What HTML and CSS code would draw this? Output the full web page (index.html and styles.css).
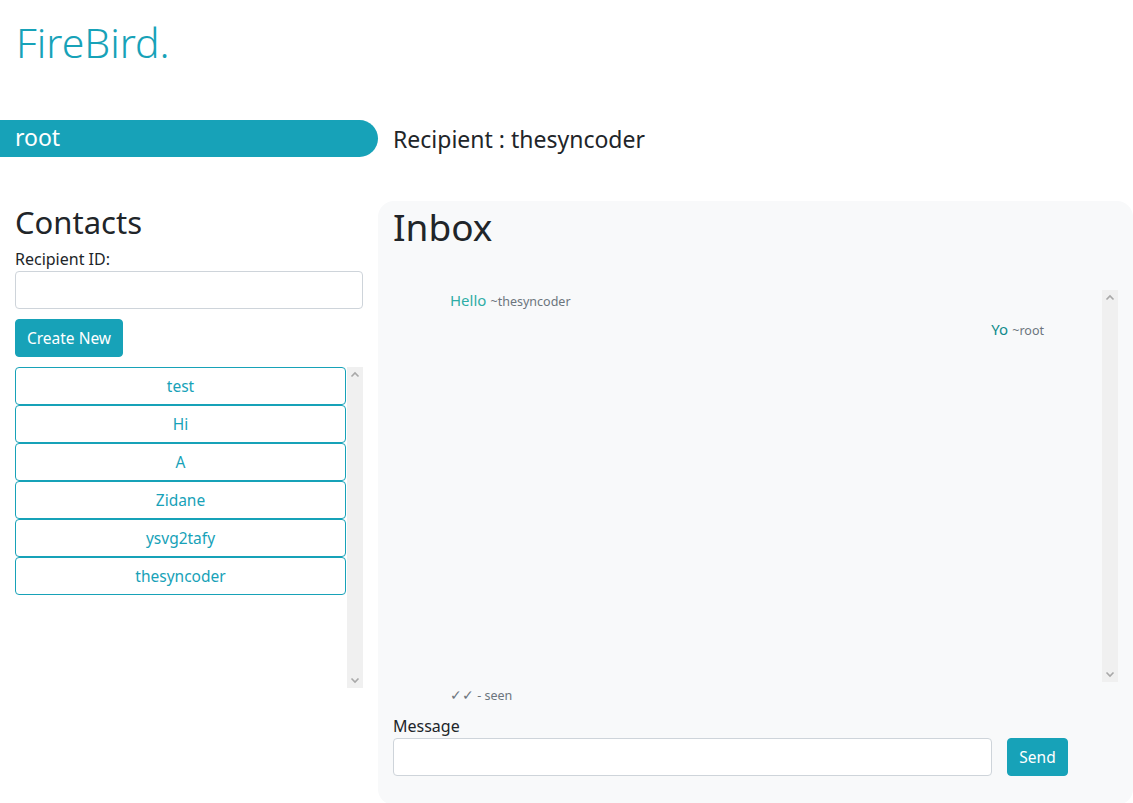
FILE: index.html
```html
<!DOCTYPE html>
<html lang="en">
<head>
<meta charset="utf-8">
<title>FireBird</title>
<link rel="stylesheet" href="styles.css">
</head>
<body>
<header class="brand">FireBird.</header>

<div class="userbar">
  <div class="user-pill">root</div>
  <div class="recipient">Recipient : thesyncoder</div>
</div>

<main class="main">
  <section class="contacts">
    <h2 class="contacts-title">Contacts</h2>
    <label class="field-label" for="rid">Recipient ID:</label>
    <input id="rid" class="text-input" type="text">
    <button class="btn-info create-btn">Create New</button>
    <div class="scroll-box contact-box">
      <div class="contact-list">
        <button class="contact">test</button>
        <button class="contact">Hi</button>
        <button class="contact">A</button>
        <button class="contact">Zidane</button>
        <button class="contact">ysvg2tafy</button>
        <button class="contact">thesyncoder</button>
      </div>
      <div class="fake-scrollbar">
        <svg class="arrow" width="16" height="16" viewBox="0 0 16 16"><polyline points="4.5,9.5 8,6 11.5,9.5" fill="none" stroke="#a8a8a8" stroke-width="1.6"/></svg>
        <svg class="arrow" width="16" height="16" viewBox="0 0 16 16"><polyline points="4.5,6.5 8,10 11.5,6.5" fill="none" stroke="#a8a8a8" stroke-width="1.6"/></svg>
      </div>
    </div>
  </section>

  <section class="inbox">
    <h1 class="inbox-title">Inbox</h1>
    <div class="scroll-box message-box">
      <div class="messages">
        <div class="msg msg-in"><span class="msg-text in">Hello</span> <span class="msg-meta">~thesyncoder</span></div>
        <div class="msg msg-out"><span class="msg-text out">Yo</span> <span class="msg-meta">~root</span></div>
      </div>
      <div class="fake-scrollbar">
        <svg class="arrow" width="16" height="16" viewBox="0 0 16 16"><polyline points="4.5,9.5 8,6 11.5,9.5" fill="none" stroke="#a8a8a8" stroke-width="1.6"/></svg>
        <svg class="arrow" width="16" height="16" viewBox="0 0 16 16"><polyline points="4.5,6.5 8,10 11.5,6.5" fill="none" stroke="#a8a8a8" stroke-width="1.6"/></svg>
      </div>
    </div>
    <div class="seen"><span class="ticks">✓✓</span> - seen</div>
    <label class="field-label msg-label" for="msg">Message</label>
    <div class="send-row">
      <input id="msg" class="text-input msg-input" type="text">
      <button class="btn-info send-btn">Send</button>
    </div>
  </section>
</main>
</body>
</html>
```

FILE: styles.css
```css
* { box-sizing: border-box; }

body {
  margin: 0;
  font-family: "Segoe UI", "Noto Sans", "Open Sans", sans-serif;
  font-size: 16px;
  line-height: 1.5;
  color: #212529;
  background: #fff;
}

.brand {
  font-size: 41px;
  font-weight: 300;
  line-height: 1.2;
  color: #17a2b8;
  padding: 18px 0 0 16px;
  height: 120px;
}

.userbar {
  display: flex;
  align-items: center;
  height: 37px;
}

.user-pill {
  width: 378px;
  height: 37px;
  background: #17a2b8;
  color: #fff;
  font-size: 23px;
  line-height: 35px;
  padding-left: 15px;
  border-radius: 0 19px 19px 0;
}

.recipient {
  font-size: 23px;
  padding-left: 15px;
  line-height: 34px;
}

.main {
  display: flex;
  margin-top: 44px;
}

.contacts {
  width: 378px;
  padding: 0 15px;
  display: flex;
  flex-direction: column;
  align-items: flex-start;
}

.contacts-title {
  margin: 3px 0 6px;
  font-size: 31px;
  font-weight: 400;
  line-height: 1.2;
}

.field-label {
  display: block;
  font-size: 16px;
  line-height: 24px;
}

.text-input {
  width: 100%;
  height: 38px;
  border: 1px solid #ced4da;
  border-radius: 4px;
  background: #fff;
  font: inherit;
  padding: 6px 12px;
}

.btn-info {
  background: #17a2b8;
  color: #fff;
  border: 1px solid #17a2b8;
  border-radius: 4px;
  font: inherit;
  font-size: 15.5px;
  height: 38px;
  padding: 0 12px;
  cursor: pointer;
}

.create-btn {
  margin-top: 10px;
  width: 108px;
  padding: 0;
}

.scroll-box {
  display: flex;
  width: 100%;
}

.contact-box {
  margin-top: 10px;
  height: 321px;
}

.contact-list {
  flex: 1;
  display: flex;
  flex-direction: column;
  padding-right: 1px;
}

.contact {
  height: 38px;
  background: #fff;
  border: 1px solid #17a2b8;
  border-radius: 4px;
  color: #17a2b8;
  font: inherit;
  font-size: 15.5px;
  text-align: center;
  padding: 0;
}

.fake-scrollbar {
  width: 16px;
  flex: none;
  background: #f0f0f0;
  display: flex;
  flex-direction: column;
  justify-content: space-between;
}

.arrow { display: block; }

.inbox {
  flex: 1;
  background: #f8f9fa;
  border-radius: 16px;
  padding: 0 15px 29px;
}

.inbox-title {
  margin: 0;
  font-size: 37px;
  font-weight: 400;
  line-height: 1.2;
  padding-top: 4px;
}

.message-box {
  margin-top: 41px;
  height: 392px;
}

.messages {
  flex: 1;
  padding: 0 58px 0 57px;
}

.msg {
  line-height: 20px;
  margin-bottom: 7px;
}

.msg-out { text-align: right; }

.msg-text { font-size: 15px; }
.msg-text.in { color: #2eada6; }
.msg-text.out { color: #108c8c; }

.msg-meta {
  font-size: 12.5px;
  color: #6c757d;
}

.seen {
  padding-left: 57px;
  font-size: 12.5px;
  color: #6c757d;
  line-height: 26px;
}

.ticks { font-size: 14px; }

.msg-label { margin-top: 5px; }

.send-row {
  display: flex;
  gap: 15px;
  padding-right: 50px;
}

.msg-input { flex: 1; }

.send-btn {
  width: 61px;
  padding: 0;
}
```
